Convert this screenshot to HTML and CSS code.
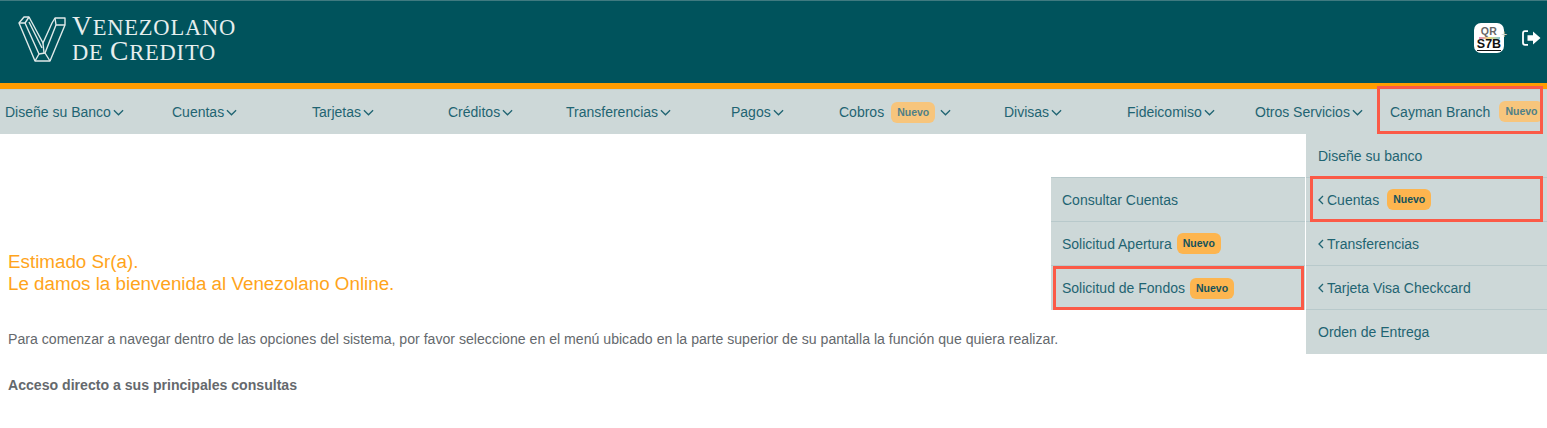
FILE: index.html
```html
<!DOCTYPE html>
<html lang="es">
<head>
    <meta charset="UTF-8">
    <meta name="viewport" content="width=device-width, initial-scale=1.0">
    <title>Venezolano Online</title>
    <link rel="stylesheet" href="styles.css">
</head>
<body>
    <header class="topbar">
        <div class="brand">
            <svg class="brand-mark" width="48" height="46" viewBox="0 0 48 46" fill="none" stroke="#dfe9e9" stroke-width="1.4" stroke-linejoin="round">
                <path d="M1 7 L6 1 L11 1 L25 27 L34 7 L37 2 L47 2 L47 9 L32 45 L17 45 Z"/>
                <path d="M1 7 L7 7 L11 1"/>
                <path d="M7 7 L21 38 L17 45"/>
                <path d="M37 2 L38 9 L47 9"/>
                <path d="M38 9 L27 37 L21 38"/>
                <path d="M27 37 L32 45"/>
                <path d="M25 27 L26 37"/>
                <path d="M11 6 L24 32"/>
            </svg>
            <div class="brand-name">
                <span class="brand-line"><span class="brand-cap">V</span>ENEZOLANO</span>
                <span class="brand-line">DE <span class="brand-cap">C</span>REDITO</span>
            </div>
        </div>
        <div class="topbar-actions">
            <div class="qr-badge">
                <span class="qr-top">QR</span>
                <span class="qr-strip"></span>
                <span class="qr-code">S7B</span>
                <span class="qr-plus">+</span>
            </div>
            <svg class="logout" width="19" height="16" viewBox="0 0 19 16" fill="#fff">
                <path d="M6 1.2 H3 Q1 1.2 1 3.2 V12.8 Q1 14.8 3 14.8 H6" fill="none" stroke="#fff" stroke-width="1.8"/>
                <path d="M11 1.5 L18.5 8 L11 14.5 V10.8 H5.5 V5.2 H11 Z"/>
            </svg>
        </div>
    </header>
    <div class="accent"></div>

    <nav class="mainnav">
        <a class="nav-item">Diseñe su Banco<svg class="chev" viewBox="0 0 12 7"><path d="M1 1 L6 6 L11 1"/></svg></a>
        <a class="nav-item">Cuentas<svg class="chev" viewBox="0 0 12 7"><path d="M1 1 L6 6 L11 1"/></svg></a>
        <a class="nav-item">Tarjetas<svg class="chev" viewBox="0 0 12 7"><path d="M1 1 L6 6 L11 1"/></svg></a>
        <a class="nav-item">Créditos<svg class="chev" viewBox="0 0 12 7"><path d="M1 1 L6 6 L11 1"/></svg></a>
        <a class="nav-item">Transferencias<svg class="chev" viewBox="0 0 12 7"><path d="M1 1 L6 6 L11 1"/></svg></a>
        <a class="nav-item">Pagos<svg class="chev" viewBox="0 0 12 7"><path d="M1 1 L6 6 L11 1"/></svg></a>
        <a class="nav-item">Cobros<span class="badge badge-faded badge-cobros">Nuevo</span><svg class="chev chev-wide" viewBox="0 0 12 7"><path d="M1 1 L6 6 L11 1"/></svg></a>
        <a class="nav-item">Divisas<svg class="chev" viewBox="0 0 12 7"><path d="M1 1 L6 6 L11 1"/></svg></a>
        <a class="nav-item">Fideicomiso<svg class="chev" viewBox="0 0 12 7"><path d="M1 1 L6 6 L11 1"/></svg></a>
        <a class="nav-item">Otros Servicios<svg class="chev" viewBox="0 0 12 7"><path d="M1 1 L6 6 L11 1"/></svg></a>
        <a class="nav-item nav-cayman">Cayman Branch<span class="badge badge-faded">Nuevo</span></a>

        <ul class="dropdown">
            <li>Diseñe su banco</li>
            <li class="has-sub marked-row">
                <svg class="caret" viewBox="0 0 6 10"><path d="M5 1 L1 5 L5 9"/></svg>Cuentas<span class="badge badge-spaced">Nuevo</span>
                <ul class="submenu">
                    <li>Consultar Cuentas</li>
                    <li>Solicitud Apertura<span class="badge">Nuevo</span></li>
                    <li class="marked-sub">Solicitud de Fondos<span class="badge">Nuevo</span></li>
                </ul>
            </li>
            <li class="has-sub"><svg class="caret" viewBox="0 0 6 10"><path d="M5 1 L1 5 L5 9"/></svg>Transferencias</li>
            <li class="has-sub"><svg class="caret" viewBox="0 0 6 10"><path d="M5 1 L1 5 L5 9"/></svg>Tarjeta Visa Checkcard</li>
            <li>Orden de Entrega</li>
        </ul>
    </nav>

    <main class="content">
        <h2 class="welcome">Estimado Sr(a).<br>Le damos la bienvenida al Venezolano Online.</h2>
        <p class="intro">Para comenzar a navegar dentro de las opciones del sistema, por favor seleccione en el menú ubicado en la parte superior de su pantalla la función que quiera realizar.</p>
        <p class="shortcuts">Acceso directo a sus principales consultas</p>
    </main>
</body>
</html>
```
FILE: styles.css
```css
* {
    margin: 0;
    padding: 0;
    box-sizing: border-box;
}

body {
    font-family: 'Liberation Sans', Arial, sans-serif;
    background-color: #fff;
    color: #65696d;
    overflow: hidden;
}

.topbar {
    height: 83px;
    background-color: #00535c;
    border-top: 1px solid #3f7a80;
    display: flex;
    justify-content: space-between;
    align-items: flex-start;
}

.brand {
    display: flex;
    padding: 15px 0 0 18px;
}

.brand-mark {
    margin-right: 6px;
}

.brand-name {
    display: flex;
    flex-direction: column;
    margin-top: -1px;
    font-family: 'Liberation Serif', serif;
    font-size: 22.5px;
    letter-spacing: 0.8px;
    line-height: 25px;
    color: #e6eeee;
}

.brand-line {
    display: block;
    height: 25px;
    white-space: nowrap;
}

.brand-cap {
    font-size: 27.5px;
    line-height: 20px;
}

.topbar-actions {
    display: flex;
    align-items: center;
    gap: 18px;
    padding: 22px 6px 0 0;
}

.qr-badge {
    width: 30px;
    height: 30px;
    border-radius: 7px;
    background-color: #fff;
    display: flex;
    flex-direction: column;
    align-items: center;
    position: relative;
    padding-top: 4px;
    font-weight: bold;
}

.qr-top {
    font-size: 10.5px;
    line-height: 9px;
    font-weight: bold;
    color: #666;
    letter-spacing: 0.5px;
}

.qr-strip {
    width: 21px;
    height: 2px;
    margin-top: 1px;
    background: linear-gradient(to right, #e58ac0, #e8d878, #7fc6d8);
}

.qr-code {
    font-size: 12.5px;
    line-height: 11px;
    color: #111;
    border-bottom: 1px solid #111;
}

.qr-plus {
    position: absolute;
    right: -3px;
    top: 7px;
    font-size: 10px;
    line-height: 10px;
    font-weight: normal;
    color: #c9d4d5;
}

.accent {
    height: 7px;
    background-color: #ff9c00;
    border-bottom: 1px solid #c4d2d2;
}

.mainnav {
    position: relative;
    height: 44px;
    background-color: #cdd8d8;
    display: grid;
    grid-template-columns: 167px 140px 136px 118px 165px 108px 165px 123px 128px 127px 1fr;
    align-items: center;
    font-size: 14px;
    color: #1f6472;
}

.nav-item {
    padding-left: 5px;
    display: flex;
    align-items: center;
    white-space: nowrap;
}

.nav-cayman {
    padding-left: 13px;
    height: 44px;
    position: relative;
    padding-bottom: 1px;
}

.nav-cayman::after {
    content: "";
    position: absolute;
    left: 0;
    right: 4px;
    top: -4px;
    bottom: 0;
    border: 3px solid #fb5a47;
}

.chev {
    width: 11px;
    height: 7px;
    margin-left: 2px;
    fill: none;
    stroke: #1f6472;
    stroke-width: 1.4;
}

.chev-wide {
    margin-left: 5px;
}

.badge {
    display: inline-block;
    margin-left: 5px;
    padding: 0 6px;
    height: 21px;
    line-height: 21px;
    border-radius: 6px;
    background-color: #fdb54f;
    color: #14525c;
    font-size: 10.5px;
    font-weight: bold;
}

.badge-faded {
    margin-left: 9px;
    background-color: #f7c57c;
    color: #4f8089;
}

.badge-cobros {
    margin-left: 7px;
}

.badge-spaced {
    margin-left: 8px;
}

.dropdown,
.submenu {
    position: absolute;
    list-style: none;
    background-color: #cdd8d8;
    font-size: 14px;
    color: #1f6472;
}

.dropdown {
    top: 100%;
    right: 0;
    width: 241px;
}

.dropdown li {
    height: 44px;
    display: flex;
    align-items: center;
    padding-left: 12px;
    border-bottom: 1px solid #b8c9cb;
    position: relative;
}

.dropdown > li:last-child {
    border-bottom: none;
}

.caret {
    width: 6px;
    height: 10px;
    margin-right: 3px;
    fill: none;
    stroke: #1f6472;
    stroke-width: 1.3;
}

.marked-row::after {
    content: "";
    position: absolute;
    left: 4px;
    right: 4px;
    top: -2px;
    bottom: -1px;
    border: 3px solid #fb5a47;
}

.submenu {
    top: 0;
    right: calc(100% + 1px);
    width: 254px;
    box-shadow: 0 -1px 0 #b8c9cb;
}

.dropdown .submenu li {
    padding-left: 11px;
}

.submenu .marked-sub {
    border-bottom: none;
}

.marked-sub::after {
    content: "";
    position: absolute;
    left: 2px;
    right: 1px;
    top: 0;
    bottom: 0;
    border: 3px solid #fb5a47;
}

.content {
    padding: 117px 0 0 8px;
}

.welcome {
    font-size: 18.8px;
    font-weight: normal;
    line-height: 22px;
    color: #ffa41b;
}

.intro {
    margin-top: 34px;
    font-size: 14.12px;
    line-height: 20px;
}

.shortcuts {
    margin-top: 26px;
    font-size: 14.1px;
    line-height: 20px;
    font-weight: bold;
}
```
